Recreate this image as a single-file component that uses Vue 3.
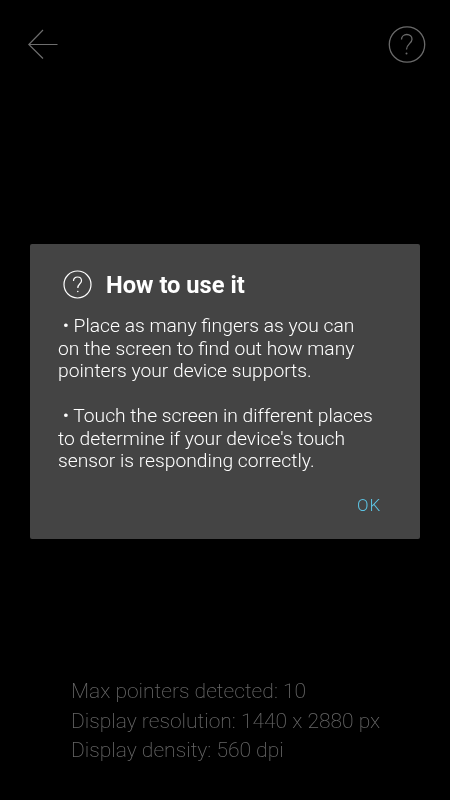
<script setup>
const info = [
  'Max pointers detected: 10',
  'Display resolution: 1440 x 2880 px',
  'Display density: 560 dpi',
];
</script>

<template>
  <div class="screen">
    <div class="top">
      <svg class="back" width="32" height="32" viewBox="0 0 32 32">
        <path d="M15 1 L0.8 15.5 L15 29.5 M0.8 15.5 H29.5" />
      </svg>
      <svg class="help" width="38" height="38" viewBox="0 0 38 38">
        <circle cx="19" cy="18.5" r="17.7" />
        <path d="M13.5 13.5 C13.5 10.5 16 8.5 18.8 8.5 C21.8 8.5 24 10.5 24 13.2 C24 17.5 18.5 18 18.5 23.5" />
        <circle class="dot" cx="18.5" cy="27.5" r="1" />
      </svg>
    </div>

    <div class="dialog">
      <div class="title">
        <svg class="title-icon" width="29" height="29" viewBox="0 0 29 29">
          <circle cx="14.5" cy="14.5" r="13.5" />
          <path d="M10.5 11 C10.5 8.5 12.3 7 14.5 7 C16.7 7 18.5 8.5 18.5 10.7 C18.5 13.7 14.8 14 14.8 18" />
          <circle class="dot" cx="14.8" cy="21.5" r="0.8" />
        </svg>
        <h2>How to use it</h2>
      </div>
      <div class="message">
        <p>&nbsp;• Place as many fingers as you can<br>on the screen to find out how many<br>pointers your device supports.</p>
        <p>&nbsp;• Touch the screen in different places<br>to determine if your device's touch<br>sensor is responding correctly.</p>
      </div>
      <div class="actions">
        <span class="ok">OK</span>
      </div>
    </div>

    <div class="info">
      <div v-for="line in info" :key="line">{{ line }}</div>
    </div>
  </div>
</template>

<style scoped>
.screen {
  width: 450px;
  height: 800px;
  background: #000;
  display: flex;
  flex-direction: column;
  font-family: Roboto, "Liberation Sans", sans-serif;
  overflow: hidden;
}

.top {
  display: flex;
  justify-content: space-between;
  align-items: center;
  padding: 26px 24px 0 28px;
  height: 38px;
}

svg {
  display: block;
  fill: none;
}

.back path {
  stroke: #6e6e6e;
  stroke-width: 1.2;
}

.help circle,
.help path {
  stroke: #6a6a6a;
  stroke-width: 1.3;
}

.help .dot {
  fill: #6a6a6a;
  stroke: none;
}

.dialog {
  margin: 180px 30px 0;
  height: 295px;
  box-sizing: border-box;
  background: #444;
  border-radius: 2px;
  padding: 26px 0 0 33px;
  color: #fff;
}

.title {
  display: flex;
  align-items: center;
  gap: 14px;
}

.title-icon circle,
.title-icon path {
  stroke: #fff;
  stroke-width: 1.2;
}

.title-icon .dot {
  fill: #fff;
  stroke: none;
}

h2 {
  margin: 1px 0 -1px;
  font-size: 23.7px;
  font-weight: 700;
  line-height: 29px;
  will-change: transform;
}

.message {
  margin: 16px 0 0 -5px;
  font-size: 19.25px;
  font-weight: 300;
  line-height: 22.5px;
  white-space: nowrap;
  will-change: transform;
}

.message p {
  margin: 0 0 22.5px;
}

.actions {
  display: flex;
  justify-content: flex-end;
  padding: 0 39px 0 0;
}

.ok {
  color: #5cc4e4;
  font-size: 17px;
  font-weight: 300;
  letter-spacing: 1px;
  will-change: transform;
}

.info {
  margin: 138px 0 0 71px;
  color: #666;
  font-size: 21px;
  font-weight: 200;
  line-height: 29.5px;
  will-change: transform;
}
</style>
